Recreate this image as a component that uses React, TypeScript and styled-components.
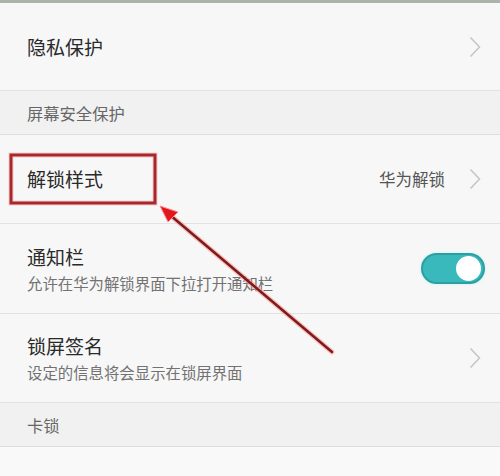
import React from "react";
import styled, { createGlobalStyle } from "styled-components";

const Global = createGlobalStyle`
  html, body { margin: 0; padding: 0; background: #f7f7f7; }
  body { font-family: "Noto Sans CJK SC", "Noto Sans", sans-serif; }
`;

const Page = styled.div`
  position: relative;
  width: 500px;
  height: 476px;
  overflow: hidden;
  background: #f7f7f7;
  border-top: 3px solid #aab4aa;
  box-sizing: border-box;
`;

const Row = styled.div<{ $h: number }>`
  display: flex;
  align-items: center;
  height: ${(p) => p.$h}px;
  padding: 0 19px 0 27px;
  border-bottom: 1px solid #e2e2e2;
  box-sizing: border-box;
  background: #f7f7f7;
`;

const Section = styled.div<{ $h: number }>`
  display: flex;
  align-items: center;
  height: ${(p) => p.$h}px;
  padding-left: 27px;
  background: #f1f1f1;
  border-bottom: 1px solid #dedede;
  box-sizing: border-box;
  font-size: 16.3px;
  color: #666;
`;

const Texts = styled.div`
  flex: 1;
  display: flex;
  flex-direction: column;
  gap: 4px;
`;

const Title = styled.div`
  font-size: 19px;
  color: #2a2a2a;
  line-height: 24px;
`;

const Sub = styled.div`
  font-size: 15.4px;
  color: #727272;
  line-height: 20px;
`;

const Value = styled.div`
  font-size: 16.5px;
  color: #555;
  margin-right: 24px;
`;

const Toggle = styled.div`
  width: 64px;
  height: 31px;
  border-radius: 16px;
  background: #3ab9bd;
  border: 2px solid #2f9ea2;
  box-sizing: border-box;
  display: flex;
  align-items: center;
  justify-content: flex-end;
  padding-right: 2px;
  margin-right: -4px;
  box-shadow: 0 0 3px #b9f0f0;
`;

const Knob = styled.div`
  width: 25px;
  height: 25px;
  border-radius: 50%;
  background: #fff;
`;

const Bottom = styled.div`
  height: 40px;
  background: #f9f9f9;
`;

const Overlay = styled.svg`
  position: absolute;
  left: 0;
  top: -3px;
  pointer-events: none;
`;

const Chevron = () => (
  <svg width="12" height="22" viewBox="0 0 12 22">
    <path d="M1.5 1.5 L10.5 11 L1.5 20.5" fill="none" stroke="#c6c6c6" strokeWidth="1.6" />
  </svg>
);

export default function App() {
  return (
    <>
      <Global />
      <Page>
        <Row $h={88}>
          <Texts>
            <Title>隐私保护</Title>
          </Texts>
          <Chevron />
        </Row>
        <Section $h={44}>屏幕安全保护</Section>
        <Row $h={89}>
          <Texts>
            <Title>解锁样式</Title>
          </Texts>
          <Value>华为解锁</Value>
          <Chevron />
        </Row>
        <Row $h={90}>
          <Texts>
            <Title>通知栏</Title>
            <Sub>允许在华为解锁界面下拉打开通知栏</Sub>
          </Texts>
          <Toggle>
            <Knob />
          </Toggle>
        </Row>
        <Row $h={89}>
          <Texts>
            <Title>锁屏签名</Title>
            <Sub>设定的信息将会显示在锁屏界面</Sub>
          </Texts>
          <Chevron />
        </Row>
        <Section $h={44}>卡锁</Section>
        <Bottom />
        <Overlay width="500" height="476" viewBox="0 0 500 476">
          <rect x="11" y="155" width="144" height="48" fill="none" stroke="#ffb0b0" strokeWidth="5" opacity="0.6" />
          <rect x="11" y="155" width="144" height="48" fill="none" stroke="#a52a2e" strokeWidth="3" />
          <line x1="170" y1="215" x2="332" y2="352" stroke="#ff9c9c" strokeWidth="5" strokeLinecap="round" opacity="0.6" />
          <line x1="170" y1="215" x2="332" y2="352" stroke="#7d1c1c" strokeWidth="2.5" strokeLinecap="round" />
          <polygon points="160,206 178,212 168,222" fill="#e2161c" stroke="#ff8a8a" strokeWidth="1" />
        </Overlay>
      </Page>
    </>
  );
}
